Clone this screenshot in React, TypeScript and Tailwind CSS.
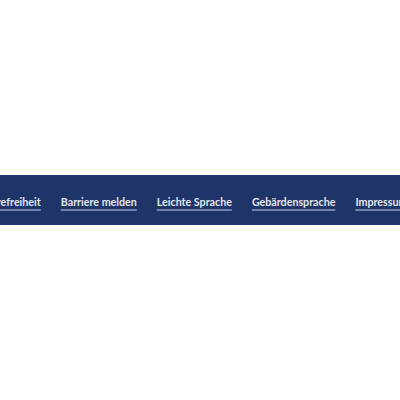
const links = ['Barrierefreiheit', 'Barriere melden', 'Leichte Sprache', 'Gebärdensprache', 'Impressum', 'Datenschutz']

export default function App() {
  return (
    <div className="w-[400px] h-[400px] bg-white flex flex-col overflow-hidden" style={{ fontFamily: 'Lato, "Open Sans", sans-serif' }}>
      <div className="h-[175px]" />
      <nav className="h-[50px] bg-[#1f3469] flex items-center overflow-hidden whitespace-nowrap">
        <ul className="flex items-center gap-[20px] ml-[-32px]">
          {links.map((l) => (
            <li key={l}>
              <a href="#" className="text-[10.7px] font-bold text-[#e3e7f0] underline decoration-[#6f80ab] decoration-[1.5px] underline-offset-[3px]">
                {l}
              </a>
            </li>
          ))}
        </ul>
      </nav>
    </div>
  )
}
